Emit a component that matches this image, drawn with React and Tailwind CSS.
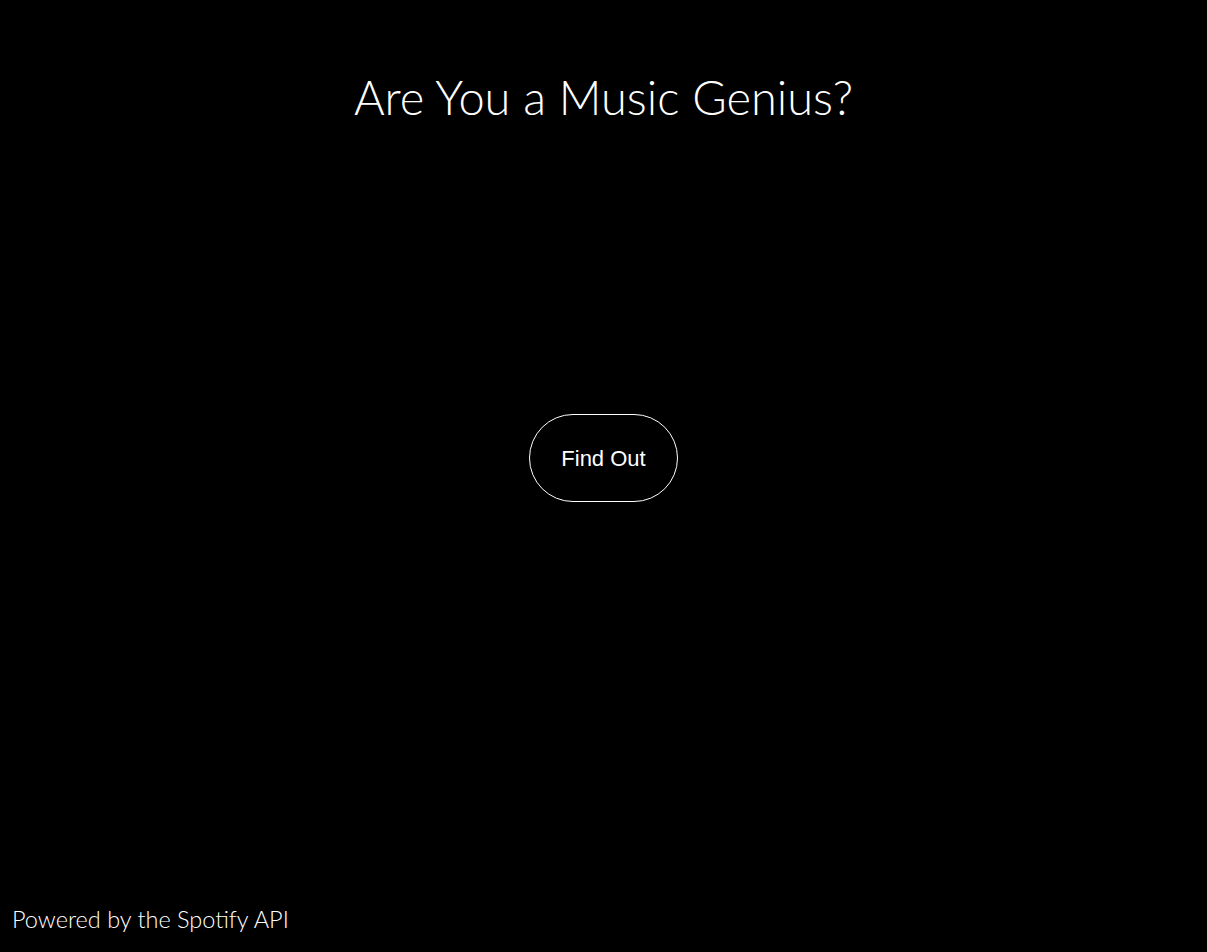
export default function App() {
  return (
    <div className="min-h-screen bg-black text-white flex flex-col font-['Lato',sans-serif]">
      {/* HEADER */}
      <h1 className="pt-[69px] text-center text-[47px] font-light leading-[1.2]">
        Are You a Music Genius?
      </h1>

      {/* START */}
      <div className="pt-[289px] flex justify-center">
        <button className="w-[149px] h-[88px] rounded-full border border-white bg-black text-white text-[22px] font-['Liberation_Sans',Arial,sans-serif]">
          Find Out
        </button>
      </div>

      {/* FOOTER */}
      <p className="mt-auto pl-[12px] pb-[19px] text-[23.5px] font-light leading-[1.2]">
        Powered by the Spotify API
      </p>
    </div>
  );
}
